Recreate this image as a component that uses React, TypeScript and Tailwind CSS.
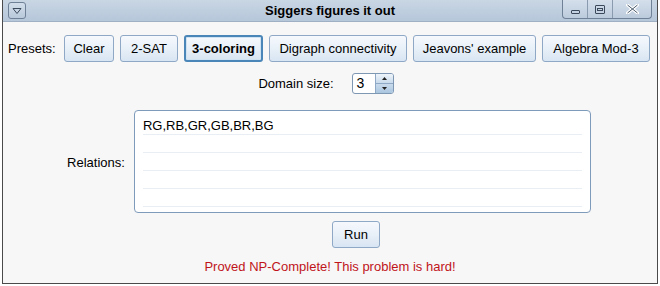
import React from 'react';

const btn =
  'h-[27px] shrink-0 whitespace-nowrap rounded-[3px] border border-[#8ea8c6] bg-gradient-to-b from-[#f6f9fd] via-[#e8f0f8] to-[#d8e5f2] text-[13px] text-black leading-none';

function TitleBar() {
  return (
    <div className="relative h-[22px] bg-gradient-to-b from-[#c9d6e4] to-[#b6c7da] border-b border-[#9fb0c4] flex items-center justify-center">
      <div className="absolute left-[5px] top-[2px] w-[18px] h-[17px] rounded-[3px] border border-[#6f8197] bg-gradient-to-b from-[#d2deea] to-[#b9c9db] flex items-center justify-center">
        <svg width="10" height="8" viewBox="0 0 10 8">
          <path d="M1 1.5 H9 L5 6.5 Z" fill="none" stroke="#3a4a5c" strokeWidth="1" />
        </svg>
      </div>
      <span className="text-[13px] font-bold text-black">Siggers figures it out</span>
      <div className="absolute right-[5px] top-0 h-[19px] flex border border-t-0 border-[#6f8197] rounded-b-[4px] overflow-hidden bg-gradient-to-b from-[#d4dfeb] to-[#bccbdc]">
        <div className="w-[25px] flex items-center justify-center border-r border-[#8a9bb0]">
          <div className="w-[9px] h-[4px] mt-[5px] border border-[#3a4a5c] rounded-[1px]" />
        </div>
        <div className="w-[25px] flex items-center justify-center border-r border-[#8a9bb0]">
          <div className="w-[10px] h-[9px] border border-[#3a4a5c] rounded-[1px] flex items-center justify-center">
            <div className="w-[6px] h-[3px] border border-[#3a4a5c]" />
          </div>
        </div>
        <div className="w-[38px] flex items-center justify-center">
          <svg width="13" height="10" viewBox="0 0 13 10">
            <path d="M1.5 1 L11.5 9 M11.5 1 L1.5 9" stroke="#fff" strokeWidth="3" strokeLinecap="round" />
            <path d="M1.5 1 L11.5 9 M11.5 1 L1.5 9" stroke="#4a5a6c" strokeWidth="1" />
          </svg>
        </div>
      </div>
    </div>
  );
}

export default function App() {
  const presets: [string, string][] = [
    ['Clear', 'w-[50px]'],
    ['2-SAT', 'w-[58px]'],
    ['3-coloring', 'w-[79px]'],
    ['Digraph connectivity', 'w-[138px]'],
    ["Jeavons' example", 'w-[123px]'],
    ['Algebra Mod-3', 'w-[108px]'],
  ];
  return (
    <div
      className="w-[660px] h-[286px] bg-white overflow-hidden"
      style={{ fontFamily: '"Liberation Sans", Arial, sans-serif' }}
    >
      <div className="ml-[2px] w-[656px] h-[284px] border-x border-b border-[#4a4a4a] flex flex-col bg-[#f7f7f7]">
        <TitleBar />
        <div className="flex items-center mt-[13px] pl-[5px] gap-[6px]">
          <span className="text-[13px] w-[50px] whitespace-nowrap">Presets:</span>
          {presets.map(([p, w]) =>
            p === '3-coloring' ? (
              <button
                key={p}
                className={`${w} h-[27px] shrink-0 whitespace-nowrap rounded-[3px] border-2 border-[#4a86b8] bg-gradient-to-b from-[#f6f9fd] via-[#e8f0f8] to-[#d8e5f2] text-[13px] font-bold leading-none shadow-[inset_0_0_0_1px_#cfe3f3]`}
              >
                {p}
              </button>
            ) : (
              <button key={p} className={`${btn} ${w}`}>
                {p}
              </button>
            )
          )}
        </div>
        <div className="flex items-center justify-center mt-[11px] ml-[-8px]">
          <span className="text-[13px]">Domain size:</span>
          <div className="ml-[18px] h-[21px] w-[42px] flex rounded-[3px] border border-[#7e97b3] overflow-hidden bg-white">
            <div className="flex-1 flex items-center pl-[4px] text-[14px]">3</div>
            <div className="w-[18px] flex flex-col border-l border-[#8ea8c6]">
              <div className="flex-1 bg-gradient-to-b from-[#eef4fa] to-[#c9dbec] border-b border-[#8ea8c6] flex items-center justify-center">
                <svg width="5" height="3" viewBox="0 0 5 3"><path d="M0 3 L2.5 0 L5 3 Z" fill="#222" /></svg>
              </div>
              <div className="flex-1 bg-gradient-to-b from-[#c9dbec] to-[#aac6e0] flex items-center justify-center">
                <svg width="5" height="3" viewBox="0 0 5 3"><path d="M0 0 L5 0 L2.5 3 Z" fill="#222" /></svg>
              </div>
            </div>
          </div>
        </div>
        <div className="flex items-center justify-center mt-[16px] ml-[-2px]">
          <span className="text-[13px] mr-[9px] mt-[2px]">Relations:</span>
          <div className="w-[457px] h-[103px] rounded-[4px] border border-[#7f9bbb] bg-white px-[8px] pt-[6px]">
            <div className="text-[13px] leading-[18px] h-[18px] border-b border-[#e8eef4]">RG,RB,GR,GB,BR,BG</div>
            {[0, 1, 2, 3].map((i) => (
              <div key={i} className="h-[18px] border-b border-[#e8eef4]" />
            ))}
          </div>
        </div>
        <div className="flex justify-center mt-[8px] ml-[52px]">
          <button className={`${btn} w-[48px]`}>Run</button>
        </div>
        <div className="text-center text-[13px] text-[#c0141a] mt-[9px]">
          Proved NP-Complete! This problem is hard!
        </div>
      </div>
    </div>
  );
}
